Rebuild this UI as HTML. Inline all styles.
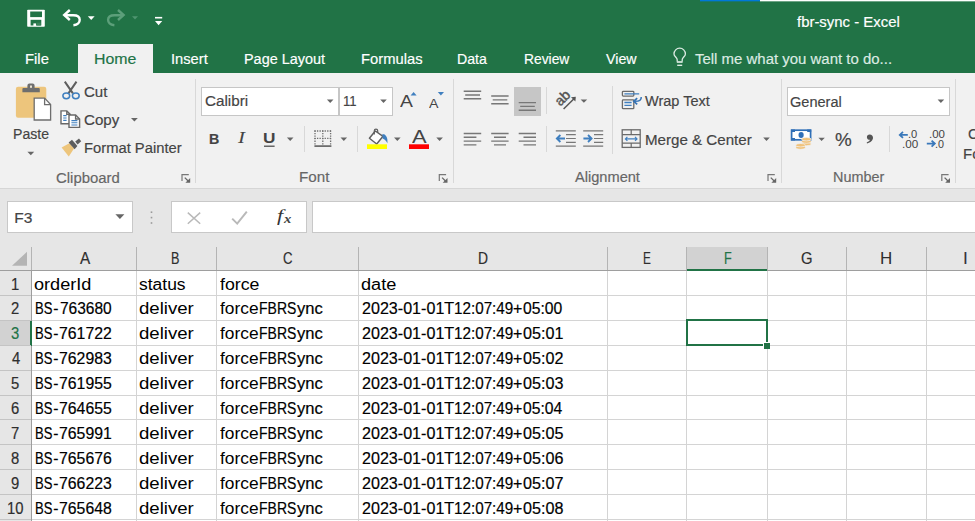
<!DOCTYPE html>
<html lang="en"><head><meta charset="utf-8"><title>fbr-sync - Excel</title>
<style>
html,body{margin:0;padding:0;background:#e6e6e6;overflow:hidden}
#app{position:relative;width:975px;height:521px;overflow:hidden;background:#e6e6e6;font-family:"Liberation Sans",sans-serif}
#app div,#app span,#app svg{position:absolute;box-sizing:border-box}
.t{white-space:pre;transform-origin:0 0;display:block}
.titlebar{left:0;top:0;width:975px;height:73px;background:#217346}
.tabhome{left:78px;top:43.5px;width:75px;height:30px;background:#f1f1f1}
.ribbon{left:0;top:73px;width:975px;height:115.6px;background:#f1f1f1;border-bottom:1px solid #d6d6d6}
.gsep{width:1px;top:79px;height:104px;background:#d8d8d8}
.ssep{width:1px;background:#d8d8d8}
.combo{background:#fff;border:1px solid #c6c6c6;top:87px;height:28.5px}
.box{background:#fff;border:1px solid #c8c8c8;top:201.3px;height:32.2px}
.sel{background:#c6c6c6}
.colhdr{left:0;top:246px;width:975px;height:24.5px;background:#e6e6e6;border-bottom:1px solid #9e9e9e}
.rowhdr{left:0;top:270.5px;width:31.5px;height:251px;background:#e6e6e6;border-right:1px solid #9e9e9e}
.cells{left:31.5px;top:270.5px;width:944px;height:251px;background:#fff}
.vl{width:1px;background:#d4d4d4;top:270.5px;height:251px}
.hl{height:1px;background:#d4d4d4;left:31.5px;width:944px}
.hvl{width:1px;background:#b4b4b4;top:247px;height:23px}
.rhl{height:1px;background:#c4c4c4;left:0;width:31px}

</style></head>
<body>
<div id="app">
<div class="titlebar"></div>
<div style="left:700px;top:0;width:60px;height:1px;background:#0078d7"></div>
<div style="left:700px;top:1px;width:60px;height:1px;background:#0078d7;opacity:.35"></div>
<div style="left:760px;top:0;width:215px;height:1px;background:#fff"></div>
<div style="left:760px;top:1px;width:215px;height:1px;background:#fff;opacity:.35"></div>
<div class="tabhome"></div>
<div class="ribbon"></div>
<div class="gsep" style="left:195.2px"></div>
<div class="gsep" style="left:453.0px"></div>
<div class="gsep" style="left:781.2px"></div>
<div class="gsep" style="left:955.4px"></div>
<div class="ssep" style="left:303.5px;top:126px;height:26px"></div>
<div class="ssep" style="left:357.0px;top:126px;height:26px"></div>
<div class="ssep" style="left:545.8px;top:87px;height:27px"></div>
<div class="ssep" style="left:545.8px;top:126px;height:26px"></div>
<div class="ssep" style="left:612.0px;top:86px;height:67.5px"></div>
<div class="ssep" style="left:889.2px;top:126px;height:26px"></div>
<div class="combo" style="left:201px;width:138px"></div>
<div class="combo" style="left:339px;width:53.6px"></div>
<div class="combo" style="left:787px;width:163px"></div>
<div class="sel" style="left:513.8px;top:87px;width:27.4px;height:28.5px"></div>
<div class="box" style="left:6.5px;width:126px"></div>
<div class="box" style="left:170.5px;width:136.5px"></div>
<div class="box" style="left:311.5px;width:680px"></div>
<div class="colhdr"></div>
<div style="left:686.9px;top:246.5px;width:80.6px;height:24px;background:#d2d2d2;border-bottom:2px solid #217346"></div>
<div class="rowhdr"></div>
<div style="left:0;top:320.8px;width:32px;height:24.9px;background:#d2d2d2;border-right:2px solid #217346"></div>
<div class="cells"></div>
<div class="hvl" style="left:31.0px"></div>
<div class="hvl" style="left:135.7px"></div>
<div class="hvl" style="left:215.5px"></div>
<div class="hvl" style="left:358.3px"></div>
<div class="hvl" style="left:606.9px"></div>
<div class="hvl" style="left:686.4px"></div>
<div class="hvl" style="left:766.5px"></div>
<div class="hvl" style="left:846.1px"></div>
<div class="hvl" style="left:925.5px"></div>
<div class="vl" style="left:135.7px"></div>
<div class="vl" style="left:215.5px"></div>
<div class="vl" style="left:358.3px"></div>
<div class="vl" style="left:606.9px"></div>
<div class="vl" style="left:686.4px"></div>
<div class="vl" style="left:766.5px"></div>
<div class="vl" style="left:846.1px"></div>
<div class="vl" style="left:925.5px"></div>
<div class="hl" style="top:294.9px"></div>
<div class="rhl" style="top:294.9px"></div>
<div class="hl" style="top:319.8px"></div>
<div class="rhl" style="top:319.8px"></div>
<div class="hl" style="top:344.7px"></div>
<div class="rhl" style="top:344.7px"></div>
<div class="hl" style="top:369.6px"></div>
<div class="rhl" style="top:369.6px"></div>
<div class="hl" style="top:394.5px"></div>
<div class="rhl" style="top:394.5px"></div>
<div class="hl" style="top:419.4px"></div>
<div class="rhl" style="top:419.4px"></div>
<div class="hl" style="top:444.3px"></div>
<div class="rhl" style="top:444.3px"></div>
<div class="hl" style="top:469.2px"></div>
<div class="rhl" style="top:469.2px"></div>
<div class="hl" style="top:494.1px"></div>
<div class="rhl" style="top:494.1px"></div>
<div class="hl" style="top:519.0px"></div>
<div class="rhl" style="top:519.0px"></div>
<div style="left:685.6px;top:318.8px;width:82.7px;height:27.4px;border:2px solid #217346"></div>
<div style="left:763.3px;top:341.7px;width:7px;height:7px;background:#217346;border:1px solid #fff;border-right:none;border-bottom:none"></div>
<svg id="icons" width="975" height="521" viewBox="0 0 975 521" style="left:0;top:0">
<!-- QAT: save -->
<g id="ic-save">
<rect x="27.2" y="9.7" width="17.6" height="17.1" rx="0.8" fill="#fff"/>
<rect x="30.2" y="11.5" width="11.8" height="5.6" fill="#217346"/>
<rect x="30.6" y="19.8" width="10.7" height="5.7" fill="#217346"/>
<rect x="33.4" y="23.4" width="2.7" height="2.6" fill="#fff"/>
<rect x="36.6" y="22.6" width="4.2" height="2.9" fill="#3a8259"/>
</g>
<!-- undo -->
<g id="ic-undo" fill="none" stroke="#fff" stroke-width="2.4">
<path d="M69.8 10L64.2 15L69.8 20"/>
<path d="M64.6 15.2H73.2C77.8 15.2 79.7 17.4 79.7 19.8C79.7 22.6 77.4 24.8 73.4 25.2"/>
</g>
<path d="M87.8 16.2h6.8l-3.4 3.8z" fill="#fff"/>
<!-- redo (disabled) -->
<g id="ic-redo" fill="none" stroke="#5c9f7a" stroke-width="2.4">
<path d="M118 10L123.6 15L118 20"/>
<path d="M123.2 15.2H114.6C110 15.2 108.1 17.4 108.1 19.8C108.1 22.6 110.4 24.8 114.4 25.2"/>
</g>
<path d="M132 16.2h6l-3 3.4z" fill="#4f9570"/>
<!-- customize -->
<rect x="155" y="16.9" width="7.2" height="1.6" fill="#fff"/>
<path d="M155 21h7.2l-3.6 4.2z" fill="#fff"/>
<!-- bulb -->
<g id="ic-bulb" fill="none" stroke="#dcebe3" stroke-width="1.3">
<path d="M677.2 61.4V59.8C677.2 57.6 674 56.4 674 53.9A5.7 5.7 0 0 1 685.4 53.9C685.4 56.4 682.2 57.6 682.2 59.8V61.4"/>
<path d="M676.8 62H682.6" stroke-width="1.7"/>
<path d="M677.2 65.3H682.2" stroke-width="1.4"/>
</g>

<!-- Paste icon -->
<g id="ic-paste">
<rect x="15.9" y="86.7" width="30.4" height="31" rx="2.2" fill="#edc57c"/>
<path d="M27.4 88V85.4a2 2 0 0 1 2-2h3.2a2 2 0 0 1 2 2V88h4.2a1 1 0 0 1 1 1V92.2H22.4V89a1 1 0 0 1 1-1z" fill="#6e6e6e"/>
<rect x="30" y="85.5" width="2" height="2.3" fill="#e9e2d0"/>
<path d="M34.2 98.1H44.6L50.6 104.6V120H34.2Z" fill="#fff" stroke="#6e6e6e" stroke-width="1.3"/>
<path d="M44.6 98.1V104.6H50.6" fill="none" stroke="#6e6e6e" stroke-width="1.3"/>
</g>
<path d="M27.4 151.7h6.8l-3.4 3.6z" fill="#666"/>
<!-- Cut -->
<g id="ic-cut" fill="none">
<path d="M64.8 81.6L72.9 93.4M76.5 81.6L68.4 93.4" stroke="#5e5e5e" stroke-width="2"/>
<ellipse cx="66.3" cy="95.8" rx="3.4" ry="2.9" stroke="#3f7fbf" stroke-width="1.5"/>
<ellipse cx="75.8" cy="95.8" rx="3.4" ry="2.9" stroke="#3f7fbf" stroke-width="1.5"/>
</g>
<!-- Copy -->
<g id="ic-copy" stroke="#686868" stroke-width="1.4" fill="#fff">
<path d="M61 110.9H66.8L70.2 114.4V123.8H61Z"/>
<path d="M66.8 110.9V114.4H70.2" fill="none"/>
<path d="M63.2 115.6h3.4M63.2 118h3.4M63.2 120.4h3.4" stroke="#3f7fbf" stroke-width="1.1"/>
<path d="M69 115H75.6L79.6 119V127.4H69Z"/>
<path d="M75.6 115V119H79.6" fill="none"/>
<path d="M71.4 120.6h6M71.4 122.8h6M71.4 125h6" stroke="#3f7fbf" stroke-width="1.1"/>
</g>
<path d="M131 118h6.8l-3.4 3.6z" fill="#666"/>
<!-- Format painter -->
<g id="ic-fp">
<path d="M61.6 147.4L69.4 143.2L74 148.6L68.8 156.6Z" fill="#edc57c"/>
<path d="M68.6 142.6L72 139.8L77.4 146L74.6 149.2Z" fill="#5e5e5e"/>
<path d="M75.2 141.6L79 138.6L81.2 141.2L77.6 144.4Z" fill="#5e5e5e"/>
</g>
<!-- dialog launchers -->
<g id="ic-dl">
<g transform="translate(181.4 174)"><path d="M0.6 7V0.6H7.4" fill="none" stroke="#777" stroke-width="1.2"/><path d="M3.4 3.6L7 7.2" fill="none" stroke="#666" stroke-width="1.3"/><path d="M8.8 4V8.8H4Z" fill="#666"/></g>
<g transform="translate(438.7 174)"><path d="M0.6 7V0.6H7.4" fill="none" stroke="#777" stroke-width="1.2"/><path d="M3.4 3.6L7 7.2" fill="none" stroke="#666" stroke-width="1.3"/><path d="M8.8 4V8.8H4Z" fill="#666"/></g>
<g transform="translate(767.4 174)"><path d="M0.6 7V0.6H7.4" fill="none" stroke="#777" stroke-width="1.2"/><path d="M3.4 3.6L7 7.2" fill="none" stroke="#666" stroke-width="1.3"/><path d="M8.8 4V8.8H4Z" fill="#666"/></g>
<g transform="translate(941.2 174)"><path d="M0.6 7V0.6H7.4" fill="none" stroke="#777" stroke-width="1.2"/><path d="M3.4 3.6L7 7.2" fill="none" stroke="#666" stroke-width="1.3"/><path d="M8.8 4V8.8H4Z" fill="#666"/></g>
</g>
<!-- combo arrows -->
<g fill="#666">
<path d="M326.9 99.6h6.6l-3.3 3.4z"/>
<path d="M380.2 99.6h6.6l-3.3 3.4z"/>
<path d="M937.6 99.6h6.6l-3.3 3.4z"/>
<path d="M286.9 137.6h6.6l-3.3 3.4z"/>
<path d="M340.5 137.6h6.6l-3.3 3.4z"/>
<path d="M394 137.6h6.6l-3.3 3.4z"/>
<path d="M436.3 137.6h6.6l-3.3 3.4z"/>
<path d="M580.6 99.4h6.6l-3.3 3.4z"/>
<path d="M763.2 137.6h6.6l-3.3 3.4z"/>
<path d="M818.4 137.8h6.4l-3.2 3.3z"/>
<path d="M115.4 214.3h9l-4.5 4.6z"/>
</g>
<!-- grow/shrink triangles -->
<path d="M410.6 95.4h6l-3-3.4z" fill="#3f7fbf"/>
<path d="M437.8 92h6.2l-3.1 3.4z" fill="#3f7fbf"/>
<!-- U underline -->
<rect x="264" y="145.6" width="10.6" height="1.2" fill="#444"/>
<!-- borders icon -->
<g id="ic-border" stroke="#6e6e6e" fill="none">
<path d="M314.4 131H331.4M314.4 138.3H331.4" stroke-width="1.3" stroke-dasharray="1.3 1.25"/>
<path d="M315 130.4V145M322.8 130.4V145M330.6 130.4V145" stroke-width="1.3" stroke-dasharray="1.3 1.25"/>
<path d="M314.4 146.1H331.4" stroke-width="1.7" stroke="#666"/>
</g>
<!-- fill bucket -->
<g id="ic-fill">
<path d="M375.3 131L369.4 138.3L376.7 144L383 136.3Z" fill="#fff" stroke="#5f5f5f" stroke-width="1.45" stroke-linejoin="round"/>
<path d="M374.3 134.6V130.8a1.7 1.7 0 0 1 3.4 0V133" fill="none" stroke="#5f5f5f" stroke-width="1.2"/>
<path d="M382.4 134C385.8 134 388 137.4 387.4 143.2C386 140.6 384.8 139.2 382.6 138.4Z" fill="#3f7fbf"/>
<rect x="367" y="144.3" width="20" height="4.7" fill="#ffff00"/>
</g>
<rect x="409" y="144.3" width="20" height="4.7" fill="#ff0000"/>
<!-- vertical align icons -->
<g stroke="#777" stroke-width="1.4">
<path d="M463.7 91.2H481.2M465.2 95H480M463.7 98.8H481.2"/>
<path d="M491.2 96H508.6M492.7 99.9H507.3M491.2 103.8H508.6"/>
<path d="M518.7 102.6H536M520.2 106.4H534.8M518.7 110.2H536"/>
<path d="M463.7 133.5H481.2M463.7 137.3H476.4M463.7 141.1H481.2M463.7 144.9H476.4"/>
<path d="M491.2 133.5H508.6M494 137.3H506M491.2 141.1H508.6M494 144.9H506"/>
<path d="M518.7 133.5H536M523.5 137.3H536M518.7 141.1H536M523.5 144.9H536"/>
</g>
<!-- orientation -->
<g id="ic-orient">
<text transform="translate(560.2 106.8) rotate(-45)" font-family="Liberation Sans, sans-serif" font-size="14" fill="#555" stroke="#555" stroke-width="0.45">ab</text>
<path d="M563.6 109L574 98.8" stroke="#555" stroke-width="1.5" fill="none"/>
<path d="M571 97.2L575.8 96.8L575.4 101.6Z" fill="#555"/>
</g>
<!-- indent icons -->
<g stroke="#777" stroke-width="1.2" fill="none">
<path d="M555.8 130.8H575.8M555.8 146.2H575.8M566 134.6H575.8M566 138.5H575.8M566 142.3H575.8"/>
<path d="M583.2 130.8H603.2M583.2 146.2H603.2M594 134.6H603.2M594 138.5H603.2M594 142.3H603.2"/>
</g>
<g stroke="#3f7fbf" stroke-width="1.8" fill="none">
<path d="M557.6 138.5H565M560.4 135L556.8 138.5L560.4 142"/>
<path d="M583.4 138.5H590.8M588 135L591.6 138.5L588 142"/>
</g>
<!-- wrap text -->
<g id="ic-wrap" fill="none">
<rect x="622.4" y="91.3" width="11.4" height="4.8" rx="0.8" stroke="#6a6a6a" stroke-width="1.3"/>
<rect x="622.4" y="99.9" width="11.4" height="8.8" rx="0.8" stroke="#6a6a6a" stroke-width="1.3"/>
<path d="M624.4 93.8H639.2M624.4 102.5H631.6M624.4 105.3H631.6" stroke="#3f7fbf" stroke-width="1.3"/>
<path d="M641.2 97C641.6 100 639.6 101.4 634.6 101.3" stroke="#3573b5" stroke-width="1.5"/>
<path d="M637.2 98.2L633.8 101.3L637.2 104.4" stroke="#3573b5" stroke-width="1.7"/>
</g>
<!-- merge -->
<g id="ic-merge" fill="none">
<rect x="622.2" y="129.8" width="18" height="17.6" stroke="#6a6a6a" stroke-width="1.3"/>
<path d="M622.2 134.6H640.2M622.2 143.2H640.2M631.2 129.8V134.6M631.2 143.2V147.4" stroke="#6a6a6a" stroke-width="1.2"/>
<path d="M625.4 138.9H637M627.4 136.9L625.4 138.9L627.4 140.9M635 136.9L637 138.9L635 140.9" stroke="#3f7fbf" stroke-width="1.2"/>
</g>
<!-- accounting -->
<g id="ic-acct">
<rect x="791.6" y="130.2" width="19" height="9.6" fill="#fff" stroke="#2f6fb7" stroke-width="1.7"/>
<ellipse cx="801.1" cy="135" rx="2.6" ry="3" fill="#2f6fb7"/>
<path d="M791 129.4h4v2.6h-4zM807.2 129.4h4v2.6h-4zM791 138h4v2.6h-4z" fill="#2f6fb7"/>
<g fill="#f0c27a" stroke="#f1f1f1" stroke-width="0.7">
<ellipse cx="806.4" cy="144" rx="4.8" ry="1.7"/>
<ellipse cx="806.4" cy="141.6" rx="4.8" ry="1.7"/>
<ellipse cx="806.4" cy="139.2" rx="4.8" ry="1.7"/>
<ellipse cx="800.6" cy="147.6" rx="4.8" ry="1.7"/>
<ellipse cx="800.6" cy="145.2" rx="4.8" ry="1.7"/>
</g>
</g>
<!-- comma -->
<path d="M869.6 134.6C871.8 134.6 873 136 873 137.8C873 140.4 870.6 142.6 867 143.4L866.7 142.5C868.6 141.8 869.8 140.8 869.9 139.8C868.2 139.8 866.9 138.8 866.9 137.2C866.9 135.7 868 134.6 869.6 134.6Z" fill="#555"/>
<!-- decimal arrows -->
<g stroke="#3a78ba" stroke-width="1.8" fill="none">
<path d="M900.2 134.9H907.8M903 131.9L899.8 134.9L903 137.9"/>
<path d="M926.8 143.6H934.4M931.6 140.6L934.8 143.6L931.6 146.6"/>
</g>
<!-- formula bar -->
<g fill="#9a9a9a">
<rect x="150.7" y="211.4" width="1.6" height="1.6"/><rect x="150.7" y="216.8" width="1.6" height="1.6"/><rect x="150.7" y="222.2" width="1.6" height="1.6"/>
</g>
<path d="M187.8 212.6L200.2 223.8M200.2 212.6L187.8 223.8" stroke="#b9b9b9" stroke-width="1.5" fill="none"/>
<path d="M232.2 218.6L237.2 223.6L246.8 211.6" stroke="#b9b9b9" stroke-width="2" fill="none"/>
<!-- select all -->
<path d="M27 251.8V265.8H12Z" fill="#b4b4b4"/>
</svg>

<div id="labels">
<span class="t" style="left:797.00px;top:12.03px;font:normal normal 15.5px/20px 'Liberation Sans', sans-serif;color:#fff;transform:scaleX(0.9623);-webkit-text-stroke:0.18px">fbr-sync - Excel</span>
<span class="t" style="left:24.64px;top:49.03px;font:normal normal 15.5px/20px 'Liberation Sans', sans-serif;color:#fff;transform:scaleX(0.9565);-webkit-text-stroke:0.18px">File</span>
<span class="t" style="left:93.77px;top:49.03px;font:normal normal 15.5px/20px 'Liberation Sans', sans-serif;color:#217346;transform:scaleX(1.0250);-webkit-text-stroke:0.18px">Home</span>
<span class="t" style="left:170.75px;top:49.03px;font:normal normal 15.5px/20px 'Liberation Sans', sans-serif;color:#fff;transform:scaleX(0.9474);-webkit-text-stroke:0.18px">Insert</span>
<span class="t" style="left:243.67px;top:49.03px;font:normal normal 15.5px/20px 'Liberation Sans', sans-serif;color:#fff;transform:scaleX(0.9302);-webkit-text-stroke:0.18px">Page Layout</span>
<span class="t" style="left:360.55px;top:49.03px;font:normal normal 15.5px/20px 'Liberation Sans', sans-serif;color:#fff;transform:scaleX(0.9524);-webkit-text-stroke:0.18px">Formulas</span>
<span class="t" style="left:456.89px;top:49.03px;font:normal normal 15.5px/20px 'Liberation Sans', sans-serif;color:#fff;transform:scaleX(0.9125);-webkit-text-stroke:0.18px">Data</span>
<span class="t" style="left:523.71px;top:49.03px;font:normal normal 15.5px/20px 'Liberation Sans', sans-serif;color:#fff;transform:scaleX(0.8920);-webkit-text-stroke:0.18px">Review</span>
<span class="t" style="left:606.00px;top:49.03px;font:normal normal 15.5px/20px 'Liberation Sans', sans-serif;color:#fff;transform:scaleX(0.9182);-webkit-text-stroke:0.18px">View</span>
<span class="t" style="left:694.50px;top:48.53px;font:normal normal 15.5px/20px 'Liberation Sans', sans-serif;color:#dcebe2;transform:scaleX(0.9650);-webkit-text-stroke:0.18px">Tell me what you want to do...</span>
<span class="t" style="left:13.39px;top:123.73px;font:normal normal 15.5px/20px 'Liberation Sans', sans-serif;color:#444;transform:scaleX(0.9079);-webkit-text-stroke:0.18px">Paste</span>
<span class="t" style="left:84.33px;top:81.53px;font:normal normal 15.5px/20px 'Liberation Sans', sans-serif;color:#444;transform:scaleX(0.9696);-webkit-text-stroke:0.18px">Cut</span>
<span class="t" style="left:84.33px;top:110.33px;font:normal normal 15.5px/20px 'Liberation Sans', sans-serif;color:#444;transform:scaleX(0.9743);-webkit-text-stroke:0.18px">Copy</span>
<span class="t" style="left:84.35px;top:138.43px;font:normal normal 15.5px/20px 'Liberation Sans', sans-serif;color:#444;transform:scaleX(0.9525);-webkit-text-stroke:0.18px">Format Painter</span>
<span class="t" style="left:55.54px;top:168.03px;font:normal normal 15.5px/20px 'Liberation Sans', sans-serif;color:#666;transform:scaleX(0.9615);-webkit-text-stroke:0.18px">Clipboard</span>
<span class="t" style="left:204.72px;top:91.43px;font:normal normal 15.5px/20px 'Liberation Sans', sans-serif;color:#444;transform:scaleX(0.9833);-webkit-text-stroke:0.18px">Calibri</span>
<span class="t" style="left:343.45px;top:91.43px;font:normal normal 15.5px/20px 'Liberation Sans', sans-serif;color:#444;transform:scaleX(0.8467);-webkit-text-stroke:0.18px">11</span>
<span class="t" style="left:208.68px;top:128.73px;font:normal bold 15.5px/20px 'Liberation Sans', sans-serif;color:#444;transform:scaleX(0.9200);-webkit-text-stroke:0.18px">B</span>
<span class="t" style="left:238.20px;top:128.13px;font:italic normal 16.5px/20px 'Liberation Serif', serif;color:#444;transform:scaleX(1.2667)">I</span>
<span class="t" style="left:263.19px;top:128.23px;font:normal bold 15.5px/20px 'Liberation Sans', sans-serif;color:#444;transform:scaleX(1.1111)">U</span>
<span class="t" style="left:400.00px;top:92.11px;font:normal normal 17px/20px 'Liberation Sans', sans-serif;color:#444;transform:scaleX(1.1364)">A</span>
<span class="t" style="left:429.00px;top:93.90px;font:normal normal 13px/20px 'Liberation Sans', sans-serif;color:#444;transform:scaleX(1.0889)">A</span>
<span class="t" style="left:411.60px;top:127.26px;font:normal normal 18px/20px 'Liberation Sans', sans-serif;color:#444;transform:scaleX(1.2167)">A</span>
<span class="t" style="left:299.02px;top:167.43px;font:normal normal 15.5px/20px 'Liberation Sans', sans-serif;color:#666;transform:scaleX(0.9800);-webkit-text-stroke:0.18px">Font</span>
<span class="t" style="left:645.40px;top:91.43px;font:normal normal 15.5px/20px 'Liberation Sans', sans-serif;color:#444;transform:scaleX(0.9362);-webkit-text-stroke:0.18px">Wrap Text</span>
<span class="t" style="left:645.02px;top:129.93px;font:normal normal 15.5px/20px 'Liberation Sans', sans-serif;color:#444;transform:scaleX(0.9759);-webkit-text-stroke:0.18px">Merge &amp; Center</span>
<span class="t" style="left:575.00px;top:167.43px;font:normal normal 15.5px/20px 'Liberation Sans', sans-serif;color:#666;transform:scaleX(0.9420);-webkit-text-stroke:0.18px">Alignment</span>
<span class="t" style="left:790.06px;top:91.93px;font:normal normal 15.5px/20px 'Liberation Sans', sans-serif;color:#444;transform:scaleX(0.9377);-webkit-text-stroke:0.18px">General</span>
<span class="t" style="left:834.95px;top:129.76px;font:normal normal 18px/20px 'Liberation Sans', sans-serif;color:#444;transform:scaleX(1.0467);-webkit-text-stroke:0.18px">%</span>
<span class="t" style="left:832.87px;top:167.43px;font:normal normal 15.5px/20px 'Liberation Sans', sans-serif;color:#666;transform:scaleX(0.9296);-webkit-text-stroke:0.18px">Number</span>
<span class="t" style="left:967.56px;top:123.73px;font:normal normal 15.5px/20px 'Liberation Sans', sans-serif;color:#444;transform:scaleX(0.9408);-webkit-text-stroke:0.18px">Conditional</span>
<span class="t" style="left:963.43px;top:143.73px;font:normal normal 15.5px/20px 'Liberation Sans', sans-serif;color:#444;transform:scaleX(0.9667);-webkit-text-stroke:0.18px">Formatting</span>
<span class="t" style="left:14.30px;top:208.23px;font:normal normal 15.5px/20px 'Liberation Sans', sans-serif;color:#444;transform:scaleX(1.0000);-webkit-text-stroke:0.18px">F3</span>
<span class="t" style="left:277.20px;top:205.93px;font:italic normal 16.5px/20px 'Liberation Serif', serif;color:#333;transform:scaleX(1.3333)">f</span>
<span class="t" style="left:283.60px;top:209.04px;font:italic bold 13.5px/20px 'Liberation Serif', serif;color:#444;transform:scaleX(1.0857)">x</span>
<span class="t" style="left:79.70px;top:248.59px;font:normal normal 15.6px/20px 'Liberation Sans', sans-serif;color:#2e2e2e;transform:scaleX(0.9800);-webkit-text-stroke:0.18px">A</span>
<span class="t" style="left:171.29px;top:248.59px;font:normal normal 15.6px/20px 'Liberation Sans', sans-serif;color:#2e2e2e;transform:scaleX(0.8111);-webkit-text-stroke:0.18px">B</span>
<span class="t" style="left:282.55px;top:248.59px;font:normal normal 15.6px/20px 'Liberation Sans', sans-serif;color:#2e2e2e;transform:scaleX(0.8500);-webkit-text-stroke:0.18px">C</span>
<span class="t" style="left:477.51px;top:248.59px;font:normal normal 15.6px/20px 'Liberation Sans', sans-serif;color:#2e2e2e;transform:scaleX(0.8900);-webkit-text-stroke:0.18px">D</span>
<span class="t" style="left:643.04px;top:248.59px;font:normal normal 15.6px/20px 'Liberation Sans', sans-serif;color:#2e2e2e;transform:scaleX(0.7556);-webkit-text-stroke:0.18px">E</span>
<span class="t" style="left:800.95px;top:248.59px;font:normal normal 15.6px/20px 'Liberation Sans', sans-serif;color:#2e2e2e;transform:scaleX(0.9500);-webkit-text-stroke:0.18px">G</span>
<span class="t" style="left:880.11px;top:248.59px;font:normal normal 15.6px/20px 'Liberation Sans', sans-serif;color:#2e2e2e;transform:scaleX(1.0889)">H</span>
<span class="t" style="left:963.25px;top:248.59px;font:normal normal 15.6px/20px 'Liberation Sans', sans-serif;color:#2e2e2e;transform:scaleX(1.0000);-webkit-text-stroke:0.18px">I</span>
<span class="t" style="left:724.29px;top:248.59px;font:normal normal 15.6px/20px 'Liberation Sans', sans-serif;color:#217346;transform:scaleX(0.8125);-webkit-text-stroke:0.18px">F</span>
<span class="t" style="left:11.33px;top:274.59px;font:normal normal 15.6px/20px 'Liberation Sans', sans-serif;color:#2e2e2e;transform:scaleX(0.9500);-webkit-text-stroke:0.18px">1</span>
<span class="t" style="left:34.04px;top:274.59px;font:normal normal 15.6px/20px 'Liberation Sans', sans-serif;color:#000;transform:scaleX(1.1625)">orderId</span>
<span class="t" style="left:138.68px;top:274.59px;font:normal normal 15.6px/20px 'Liberation Sans', sans-serif;color:#000;transform:scaleX(1.1200)">status</span>
<span class="t" style="left:219.70px;top:274.59px;font:normal normal 15.6px/20px 'Liberation Sans', sans-serif;color:#000;transform:scaleX(1.1382)">force</span>
<span class="t" style="left:361.33px;top:274.59px;font:normal normal 15.6px/20px 'Liberation Sans', sans-serif;color:#000;transform:scaleX(1.1655)">date</span>
<span class="t" style="left:11.33px;top:299.49px;font:normal normal 15.6px/20px 'Liberation Sans', sans-serif;color:#2e2e2e;transform:scaleX(0.9500);-webkit-text-stroke:0.18px">2</span>
<span class="t" style="left:35.06px;top:299.49px;font:normal normal 15.6px/20px 'Liberation Sans', sans-serif;color:#000;transform:scaleX(0.8368);-webkit-text-stroke:0.18px">BS</span>
<span class="t" style="left:53.30px;top:299.49px;font:normal normal 15.6px/20px 'Liberation Sans', sans-serif;color:#000;transform:scaleX(1.0000);-webkit-text-stroke:0.18px">-</span>
<span class="t" style="left:59.51px;top:299.49px;font:normal normal 15.6px/20px 'Liberation Sans', sans-serif;color:#000;transform:scaleX(0.9941);-webkit-text-stroke:0.18px">763680</span>
<span class="t" style="left:139.01px;top:299.49px;font:normal normal 15.6px/20px 'Liberation Sans', sans-serif;color:#000;transform:scaleX(1.1933)">deliver</span>
<span class="t" style="left:219.70px;top:299.49px;font:normal normal 15.6px/20px 'Liberation Sans', sans-serif;color:#000;transform:scaleX(1.1118)">force</span>
<span class="t" style="left:259.40px;top:299.49px;font:normal normal 15.6px/20px 'Liberation Sans', sans-serif;color:#000;transform:scaleX(0.8975);-webkit-text-stroke:0.18px">FBRS</span>
<span class="t" style="left:296.80px;top:299.49px;font:normal normal 15.6px/20px 'Liberation Sans', sans-serif;color:#000;transform:scaleX(1.0625);-webkit-text-stroke:0.18px">ync</span>
<span class="t" style="left:361.87px;top:299.49px;font:normal normal 15.6px/20px 'Liberation Sans', sans-serif;color:#000;transform:scaleX(1.0321);-webkit-text-stroke:0.18px">2023-01-01</span>
<span class="t" style="left:444.10px;top:299.49px;font:normal normal 15.6px/20px 'Liberation Sans', sans-serif;color:#000;transform:scaleX(1.0778)">T</span>
<span class="t" style="left:454.42px;top:299.49px;font:normal normal 15.6px/20px 'Liberation Sans', sans-serif;color:#000;transform:scaleX(0.9763);-webkit-text-stroke:0.18px">12:07:49</span>
<span class="t" style="left:513.18px;top:299.49px;font:normal normal 15.6px/20px 'Liberation Sans', sans-serif;color:#000;transform:scaleX(1.0250);-webkit-text-stroke:0.18px">+</span>
<span class="t" style="left:522.79px;top:299.49px;font:normal normal 15.6px/20px 'Liberation Sans', sans-serif;color:#000;transform:scaleX(1.0079);-webkit-text-stroke:0.18px">05:00</span>
<span class="t" style="left:11.33px;top:324.39px;font:normal normal 15.6px/20px 'Liberation Sans', sans-serif;color:#217346;transform:scaleX(0.9500);-webkit-text-stroke:0.18px">3</span>
<span class="t" style="left:35.06px;top:324.39px;font:normal normal 15.6px/20px 'Liberation Sans', sans-serif;color:#000;transform:scaleX(0.8368);-webkit-text-stroke:0.18px">BS</span>
<span class="t" style="left:53.30px;top:324.39px;font:normal normal 15.6px/20px 'Liberation Sans', sans-serif;color:#000;transform:scaleX(1.0000);-webkit-text-stroke:0.18px">-</span>
<span class="t" style="left:59.49px;top:324.39px;font:normal normal 15.6px/20px 'Liberation Sans', sans-serif;color:#000;transform:scaleX(1.0140);-webkit-text-stroke:0.18px">761722</span>
<span class="t" style="left:139.01px;top:324.39px;font:normal normal 15.6px/20px 'Liberation Sans', sans-serif;color:#000;transform:scaleX(1.1933)">deliver</span>
<span class="t" style="left:219.70px;top:324.39px;font:normal normal 15.6px/20px 'Liberation Sans', sans-serif;color:#000;transform:scaleX(1.1118)">force</span>
<span class="t" style="left:259.40px;top:324.39px;font:normal normal 15.6px/20px 'Liberation Sans', sans-serif;color:#000;transform:scaleX(0.8975);-webkit-text-stroke:0.18px">FBRS</span>
<span class="t" style="left:296.80px;top:324.39px;font:normal normal 15.6px/20px 'Liberation Sans', sans-serif;color:#000;transform:scaleX(1.0625);-webkit-text-stroke:0.18px">ync</span>
<span class="t" style="left:361.87px;top:324.39px;font:normal normal 15.6px/20px 'Liberation Sans', sans-serif;color:#000;transform:scaleX(1.0321);-webkit-text-stroke:0.18px">2023-01-01</span>
<span class="t" style="left:444.10px;top:324.39px;font:normal normal 15.6px/20px 'Liberation Sans', sans-serif;color:#000;transform:scaleX(1.0778)">T</span>
<span class="t" style="left:454.42px;top:324.39px;font:normal normal 15.6px/20px 'Liberation Sans', sans-serif;color:#000;transform:scaleX(0.9763);-webkit-text-stroke:0.18px">12:07:49</span>
<span class="t" style="left:513.18px;top:324.39px;font:normal normal 15.6px/20px 'Liberation Sans', sans-serif;color:#000;transform:scaleX(1.0250);-webkit-text-stroke:0.18px">+</span>
<span class="t" style="left:522.76px;top:324.39px;font:normal normal 15.6px/20px 'Liberation Sans', sans-serif;color:#000;transform:scaleX(1.0351);-webkit-text-stroke:0.18px">05:01</span>
<span class="t" style="left:11.80px;top:349.29px;font:normal normal 15.6px/20px 'Liberation Sans', sans-serif;color:#2e2e2e;transform:scaleX(0.9500);-webkit-text-stroke:0.18px">4</span>
<span class="t" style="left:35.06px;top:349.29px;font:normal normal 15.6px/20px 'Liberation Sans', sans-serif;color:#000;transform:scaleX(0.8368);-webkit-text-stroke:0.18px">BS</span>
<span class="t" style="left:53.30px;top:349.29px;font:normal normal 15.6px/20px 'Liberation Sans', sans-serif;color:#000;transform:scaleX(1.0000);-webkit-text-stroke:0.18px">-</span>
<span class="t" style="left:59.49px;top:349.29px;font:normal normal 15.6px/20px 'Liberation Sans', sans-serif;color:#000;transform:scaleX(1.0140);-webkit-text-stroke:0.18px">762983</span>
<span class="t" style="left:139.01px;top:349.29px;font:normal normal 15.6px/20px 'Liberation Sans', sans-serif;color:#000;transform:scaleX(1.1933)">deliver</span>
<span class="t" style="left:219.70px;top:349.29px;font:normal normal 15.6px/20px 'Liberation Sans', sans-serif;color:#000;transform:scaleX(1.1118)">force</span>
<span class="t" style="left:259.40px;top:349.29px;font:normal normal 15.6px/20px 'Liberation Sans', sans-serif;color:#000;transform:scaleX(0.8975);-webkit-text-stroke:0.18px">FBRS</span>
<span class="t" style="left:296.80px;top:349.29px;font:normal normal 15.6px/20px 'Liberation Sans', sans-serif;color:#000;transform:scaleX(1.0625);-webkit-text-stroke:0.18px">ync</span>
<span class="t" style="left:361.87px;top:349.29px;font:normal normal 15.6px/20px 'Liberation Sans', sans-serif;color:#000;transform:scaleX(1.0321);-webkit-text-stroke:0.18px">2023-01-01</span>
<span class="t" style="left:444.10px;top:349.29px;font:normal normal 15.6px/20px 'Liberation Sans', sans-serif;color:#000;transform:scaleX(1.0778)">T</span>
<span class="t" style="left:454.42px;top:349.29px;font:normal normal 15.6px/20px 'Liberation Sans', sans-serif;color:#000;transform:scaleX(0.9763);-webkit-text-stroke:0.18px">12:07:49</span>
<span class="t" style="left:513.18px;top:349.29px;font:normal normal 15.6px/20px 'Liberation Sans', sans-serif;color:#000;transform:scaleX(1.0250);-webkit-text-stroke:0.18px">+</span>
<span class="t" style="left:522.76px;top:349.29px;font:normal normal 15.6px/20px 'Liberation Sans', sans-serif;color:#000;transform:scaleX(1.0351);-webkit-text-stroke:0.18px">05:02</span>
<span class="t" style="left:11.33px;top:374.19px;font:normal normal 15.6px/20px 'Liberation Sans', sans-serif;color:#2e2e2e;transform:scaleX(0.9500);-webkit-text-stroke:0.18px">5</span>
<span class="t" style="left:35.06px;top:374.19px;font:normal normal 15.6px/20px 'Liberation Sans', sans-serif;color:#000;transform:scaleX(0.8368);-webkit-text-stroke:0.18px">BS</span>
<span class="t" style="left:53.30px;top:374.19px;font:normal normal 15.6px/20px 'Liberation Sans', sans-serif;color:#000;transform:scaleX(1.0000);-webkit-text-stroke:0.18px">-</span>
<span class="t" style="left:59.49px;top:374.19px;font:normal normal 15.6px/20px 'Liberation Sans', sans-serif;color:#000;transform:scaleX(1.0140);-webkit-text-stroke:0.18px">761955</span>
<span class="t" style="left:139.01px;top:374.19px;font:normal normal 15.6px/20px 'Liberation Sans', sans-serif;color:#000;transform:scaleX(1.1933)">deliver</span>
<span class="t" style="left:219.70px;top:374.19px;font:normal normal 15.6px/20px 'Liberation Sans', sans-serif;color:#000;transform:scaleX(1.1118)">force</span>
<span class="t" style="left:259.40px;top:374.19px;font:normal normal 15.6px/20px 'Liberation Sans', sans-serif;color:#000;transform:scaleX(0.8975);-webkit-text-stroke:0.18px">FBRS</span>
<span class="t" style="left:296.80px;top:374.19px;font:normal normal 15.6px/20px 'Liberation Sans', sans-serif;color:#000;transform:scaleX(1.0625);-webkit-text-stroke:0.18px">ync</span>
<span class="t" style="left:361.87px;top:374.19px;font:normal normal 15.6px/20px 'Liberation Sans', sans-serif;color:#000;transform:scaleX(1.0321);-webkit-text-stroke:0.18px">2023-01-01</span>
<span class="t" style="left:444.10px;top:374.19px;font:normal normal 15.6px/20px 'Liberation Sans', sans-serif;color:#000;transform:scaleX(1.0778)">T</span>
<span class="t" style="left:454.42px;top:374.19px;font:normal normal 15.6px/20px 'Liberation Sans', sans-serif;color:#000;transform:scaleX(0.9763);-webkit-text-stroke:0.18px">12:07:49</span>
<span class="t" style="left:513.18px;top:374.19px;font:normal normal 15.6px/20px 'Liberation Sans', sans-serif;color:#000;transform:scaleX(1.0250);-webkit-text-stroke:0.18px">+</span>
<span class="t" style="left:522.76px;top:374.19px;font:normal normal 15.6px/20px 'Liberation Sans', sans-serif;color:#000;transform:scaleX(1.0351);-webkit-text-stroke:0.18px">05:03</span>
<span class="t" style="left:11.33px;top:399.09px;font:normal normal 15.6px/20px 'Liberation Sans', sans-serif;color:#2e2e2e;transform:scaleX(0.9500);-webkit-text-stroke:0.18px">6</span>
<span class="t" style="left:35.06px;top:399.09px;font:normal normal 15.6px/20px 'Liberation Sans', sans-serif;color:#000;transform:scaleX(0.8368);-webkit-text-stroke:0.18px">BS</span>
<span class="t" style="left:53.30px;top:399.09px;font:normal normal 15.6px/20px 'Liberation Sans', sans-serif;color:#000;transform:scaleX(1.0000);-webkit-text-stroke:0.18px">-</span>
<span class="t" style="left:59.49px;top:399.09px;font:normal normal 15.6px/20px 'Liberation Sans', sans-serif;color:#000;transform:scaleX(1.0140);-webkit-text-stroke:0.18px">764655</span>
<span class="t" style="left:139.01px;top:399.09px;font:normal normal 15.6px/20px 'Liberation Sans', sans-serif;color:#000;transform:scaleX(1.1933)">deliver</span>
<span class="t" style="left:219.70px;top:399.09px;font:normal normal 15.6px/20px 'Liberation Sans', sans-serif;color:#000;transform:scaleX(1.1118)">force</span>
<span class="t" style="left:259.40px;top:399.09px;font:normal normal 15.6px/20px 'Liberation Sans', sans-serif;color:#000;transform:scaleX(0.8975);-webkit-text-stroke:0.18px">FBRS</span>
<span class="t" style="left:296.80px;top:399.09px;font:normal normal 15.6px/20px 'Liberation Sans', sans-serif;color:#000;transform:scaleX(1.0625);-webkit-text-stroke:0.18px">ync</span>
<span class="t" style="left:361.87px;top:399.09px;font:normal normal 15.6px/20px 'Liberation Sans', sans-serif;color:#000;transform:scaleX(1.0321);-webkit-text-stroke:0.18px">2023-01-01</span>
<span class="t" style="left:444.10px;top:399.09px;font:normal normal 15.6px/20px 'Liberation Sans', sans-serif;color:#000;transform:scaleX(1.0778)">T</span>
<span class="t" style="left:454.42px;top:399.09px;font:normal normal 15.6px/20px 'Liberation Sans', sans-serif;color:#000;transform:scaleX(0.9763);-webkit-text-stroke:0.18px">12:07:49</span>
<span class="t" style="left:513.18px;top:399.09px;font:normal normal 15.6px/20px 'Liberation Sans', sans-serif;color:#000;transform:scaleX(1.0250);-webkit-text-stroke:0.18px">+</span>
<span class="t" style="left:522.79px;top:399.09px;font:normal normal 15.6px/20px 'Liberation Sans', sans-serif;color:#000;transform:scaleX(1.0079);-webkit-text-stroke:0.18px">05:04</span>
<span class="t" style="left:11.33px;top:423.99px;font:normal normal 15.6px/20px 'Liberation Sans', sans-serif;color:#2e2e2e;transform:scaleX(0.9500);-webkit-text-stroke:0.18px">7</span>
<span class="t" style="left:35.06px;top:423.99px;font:normal normal 15.6px/20px 'Liberation Sans', sans-serif;color:#000;transform:scaleX(0.8368);-webkit-text-stroke:0.18px">BS</span>
<span class="t" style="left:53.30px;top:423.99px;font:normal normal 15.6px/20px 'Liberation Sans', sans-serif;color:#000;transform:scaleX(1.0000);-webkit-text-stroke:0.18px">-</span>
<span class="t" style="left:59.49px;top:423.99px;font:normal normal 15.6px/20px 'Liberation Sans', sans-serif;color:#000;transform:scaleX(1.0140);-webkit-text-stroke:0.18px">765991</span>
<span class="t" style="left:139.01px;top:423.99px;font:normal normal 15.6px/20px 'Liberation Sans', sans-serif;color:#000;transform:scaleX(1.1933)">deliver</span>
<span class="t" style="left:219.70px;top:423.99px;font:normal normal 15.6px/20px 'Liberation Sans', sans-serif;color:#000;transform:scaleX(1.1118)">force</span>
<span class="t" style="left:259.40px;top:423.99px;font:normal normal 15.6px/20px 'Liberation Sans', sans-serif;color:#000;transform:scaleX(0.8975);-webkit-text-stroke:0.18px">FBRS</span>
<span class="t" style="left:296.80px;top:423.99px;font:normal normal 15.6px/20px 'Liberation Sans', sans-serif;color:#000;transform:scaleX(1.0625);-webkit-text-stroke:0.18px">ync</span>
<span class="t" style="left:361.87px;top:423.99px;font:normal normal 15.6px/20px 'Liberation Sans', sans-serif;color:#000;transform:scaleX(1.0321);-webkit-text-stroke:0.18px">2023-01-01</span>
<span class="t" style="left:444.10px;top:423.99px;font:normal normal 15.6px/20px 'Liberation Sans', sans-serif;color:#000;transform:scaleX(1.0778)">T</span>
<span class="t" style="left:454.42px;top:423.99px;font:normal normal 15.6px/20px 'Liberation Sans', sans-serif;color:#000;transform:scaleX(0.9763);-webkit-text-stroke:0.18px">12:07:49</span>
<span class="t" style="left:513.18px;top:423.99px;font:normal normal 15.6px/20px 'Liberation Sans', sans-serif;color:#000;transform:scaleX(1.0250);-webkit-text-stroke:0.18px">+</span>
<span class="t" style="left:522.76px;top:423.99px;font:normal normal 15.6px/20px 'Liberation Sans', sans-serif;color:#000;transform:scaleX(1.0351);-webkit-text-stroke:0.18px">05:05</span>
<span class="t" style="left:11.33px;top:448.89px;font:normal normal 15.6px/20px 'Liberation Sans', sans-serif;color:#2e2e2e;transform:scaleX(0.9500);-webkit-text-stroke:0.18px">8</span>
<span class="t" style="left:35.06px;top:448.89px;font:normal normal 15.6px/20px 'Liberation Sans', sans-serif;color:#000;transform:scaleX(0.8368);-webkit-text-stroke:0.18px">BS</span>
<span class="t" style="left:53.30px;top:448.89px;font:normal normal 15.6px/20px 'Liberation Sans', sans-serif;color:#000;transform:scaleX(1.0000);-webkit-text-stroke:0.18px">-</span>
<span class="t" style="left:59.49px;top:448.89px;font:normal normal 15.6px/20px 'Liberation Sans', sans-serif;color:#000;transform:scaleX(1.0140);-webkit-text-stroke:0.18px">765676</span>
<span class="t" style="left:139.01px;top:448.89px;font:normal normal 15.6px/20px 'Liberation Sans', sans-serif;color:#000;transform:scaleX(1.1933)">deliver</span>
<span class="t" style="left:219.70px;top:448.89px;font:normal normal 15.6px/20px 'Liberation Sans', sans-serif;color:#000;transform:scaleX(1.1118)">force</span>
<span class="t" style="left:259.40px;top:448.89px;font:normal normal 15.6px/20px 'Liberation Sans', sans-serif;color:#000;transform:scaleX(0.8975);-webkit-text-stroke:0.18px">FBRS</span>
<span class="t" style="left:296.80px;top:448.89px;font:normal normal 15.6px/20px 'Liberation Sans', sans-serif;color:#000;transform:scaleX(1.0625);-webkit-text-stroke:0.18px">ync</span>
<span class="t" style="left:361.87px;top:448.89px;font:normal normal 15.6px/20px 'Liberation Sans', sans-serif;color:#000;transform:scaleX(1.0321);-webkit-text-stroke:0.18px">2023-01-01</span>
<span class="t" style="left:444.10px;top:448.89px;font:normal normal 15.6px/20px 'Liberation Sans', sans-serif;color:#000;transform:scaleX(1.0778)">T</span>
<span class="t" style="left:454.42px;top:448.89px;font:normal normal 15.6px/20px 'Liberation Sans', sans-serif;color:#000;transform:scaleX(0.9763);-webkit-text-stroke:0.18px">12:07:49</span>
<span class="t" style="left:513.18px;top:448.89px;font:normal normal 15.6px/20px 'Liberation Sans', sans-serif;color:#000;transform:scaleX(1.0250);-webkit-text-stroke:0.18px">+</span>
<span class="t" style="left:522.76px;top:448.89px;font:normal normal 15.6px/20px 'Liberation Sans', sans-serif;color:#000;transform:scaleX(1.0351);-webkit-text-stroke:0.18px">05:06</span>
<span class="t" style="left:11.33px;top:473.79px;font:normal normal 15.6px/20px 'Liberation Sans', sans-serif;color:#2e2e2e;transform:scaleX(0.9500);-webkit-text-stroke:0.18px">9</span>
<span class="t" style="left:35.06px;top:473.79px;font:normal normal 15.6px/20px 'Liberation Sans', sans-serif;color:#000;transform:scaleX(0.8368);-webkit-text-stroke:0.18px">BS</span>
<span class="t" style="left:53.30px;top:473.79px;font:normal normal 15.6px/20px 'Liberation Sans', sans-serif;color:#000;transform:scaleX(1.0000);-webkit-text-stroke:0.18px">-</span>
<span class="t" style="left:59.49px;top:473.79px;font:normal normal 15.6px/20px 'Liberation Sans', sans-serif;color:#000;transform:scaleX(1.0140);-webkit-text-stroke:0.18px">766223</span>
<span class="t" style="left:139.01px;top:473.79px;font:normal normal 15.6px/20px 'Liberation Sans', sans-serif;color:#000;transform:scaleX(1.1933)">deliver</span>
<span class="t" style="left:219.70px;top:473.79px;font:normal normal 15.6px/20px 'Liberation Sans', sans-serif;color:#000;transform:scaleX(1.1118)">force</span>
<span class="t" style="left:259.40px;top:473.79px;font:normal normal 15.6px/20px 'Liberation Sans', sans-serif;color:#000;transform:scaleX(0.8975);-webkit-text-stroke:0.18px">FBRS</span>
<span class="t" style="left:296.80px;top:473.79px;font:normal normal 15.6px/20px 'Liberation Sans', sans-serif;color:#000;transform:scaleX(1.0625);-webkit-text-stroke:0.18px">ync</span>
<span class="t" style="left:361.87px;top:473.79px;font:normal normal 15.6px/20px 'Liberation Sans', sans-serif;color:#000;transform:scaleX(1.0321);-webkit-text-stroke:0.18px">2023-01-01</span>
<span class="t" style="left:444.10px;top:473.79px;font:normal normal 15.6px/20px 'Liberation Sans', sans-serif;color:#000;transform:scaleX(1.0778)">T</span>
<span class="t" style="left:454.42px;top:473.79px;font:normal normal 15.6px/20px 'Liberation Sans', sans-serif;color:#000;transform:scaleX(0.9763);-webkit-text-stroke:0.18px">12:07:49</span>
<span class="t" style="left:513.18px;top:473.79px;font:normal normal 15.6px/20px 'Liberation Sans', sans-serif;color:#000;transform:scaleX(1.0250);-webkit-text-stroke:0.18px">+</span>
<span class="t" style="left:522.76px;top:473.79px;font:normal normal 15.6px/20px 'Liberation Sans', sans-serif;color:#000;transform:scaleX(1.0351);-webkit-text-stroke:0.18px">05:07</span>
<span class="t" style="left:7.05px;top:498.69px;font:normal normal 15.6px/20px 'Liberation Sans', sans-serif;color:#2e2e2e;transform:scaleX(0.9500);-webkit-text-stroke:0.18px">10</span>
<span class="t" style="left:35.06px;top:498.69px;font:normal normal 15.6px/20px 'Liberation Sans', sans-serif;color:#000;transform:scaleX(0.8368);-webkit-text-stroke:0.18px">BS</span>
<span class="t" style="left:53.30px;top:498.69px;font:normal normal 15.6px/20px 'Liberation Sans', sans-serif;color:#000;transform:scaleX(1.0000);-webkit-text-stroke:0.18px">-</span>
<span class="t" style="left:59.49px;top:498.69px;font:normal normal 15.6px/20px 'Liberation Sans', sans-serif;color:#000;transform:scaleX(1.0140);-webkit-text-stroke:0.18px">765648</span>
<span class="t" style="left:139.01px;top:498.69px;font:normal normal 15.6px/20px 'Liberation Sans', sans-serif;color:#000;transform:scaleX(1.1933)">deliver</span>
<span class="t" style="left:219.70px;top:498.69px;font:normal normal 15.6px/20px 'Liberation Sans', sans-serif;color:#000;transform:scaleX(1.1118)">force</span>
<span class="t" style="left:259.40px;top:498.69px;font:normal normal 15.6px/20px 'Liberation Sans', sans-serif;color:#000;transform:scaleX(0.8975);-webkit-text-stroke:0.18px">FBRS</span>
<span class="t" style="left:296.80px;top:498.69px;font:normal normal 15.6px/20px 'Liberation Sans', sans-serif;color:#000;transform:scaleX(1.0625);-webkit-text-stroke:0.18px">ync</span>
<span class="t" style="left:361.87px;top:498.69px;font:normal normal 15.6px/20px 'Liberation Sans', sans-serif;color:#000;transform:scaleX(1.0321);-webkit-text-stroke:0.18px">2023-01-01</span>
<span class="t" style="left:444.10px;top:498.69px;font:normal normal 15.6px/20px 'Liberation Sans', sans-serif;color:#000;transform:scaleX(1.0778)">T</span>
<span class="t" style="left:454.42px;top:498.69px;font:normal normal 15.6px/20px 'Liberation Sans', sans-serif;color:#000;transform:scaleX(0.9763);-webkit-text-stroke:0.18px">12:07:49</span>
<span class="t" style="left:513.18px;top:498.69px;font:normal normal 15.6px/20px 'Liberation Sans', sans-serif;color:#000;transform:scaleX(1.0250);-webkit-text-stroke:0.18px">+</span>
<span class="t" style="left:522.76px;top:498.69px;font:normal normal 15.6px/20px 'Liberation Sans', sans-serif;color:#000;transform:scaleX(1.0351);-webkit-text-stroke:0.18px">05:08</span>
<span class="t" style="left:907.74px;top:124.36px;font:normal normal 10.5px/20px 'Liberation Sans', sans-serif;color:#444;transform:scaleX(1.0625)">.0</span>
<span class="t" style="left:901.68px;top:133.56px;font:normal normal 10.5px/20px 'Liberation Sans', sans-serif;color:#444;transform:scaleX(1.1154)">.00</span>
<span class="t" style="left:928.91px;top:124.36px;font:normal normal 10.5px/20px 'Liberation Sans', sans-serif;color:#444;transform:scaleX(1.0923)">.00</span>
<span class="t" style="left:934.98px;top:133.56px;font:normal normal 10.5px/20px 'Liberation Sans', sans-serif;color:#444;transform:scaleX(1.0250)">.0</span>
</div>
</div>
</body></html>
